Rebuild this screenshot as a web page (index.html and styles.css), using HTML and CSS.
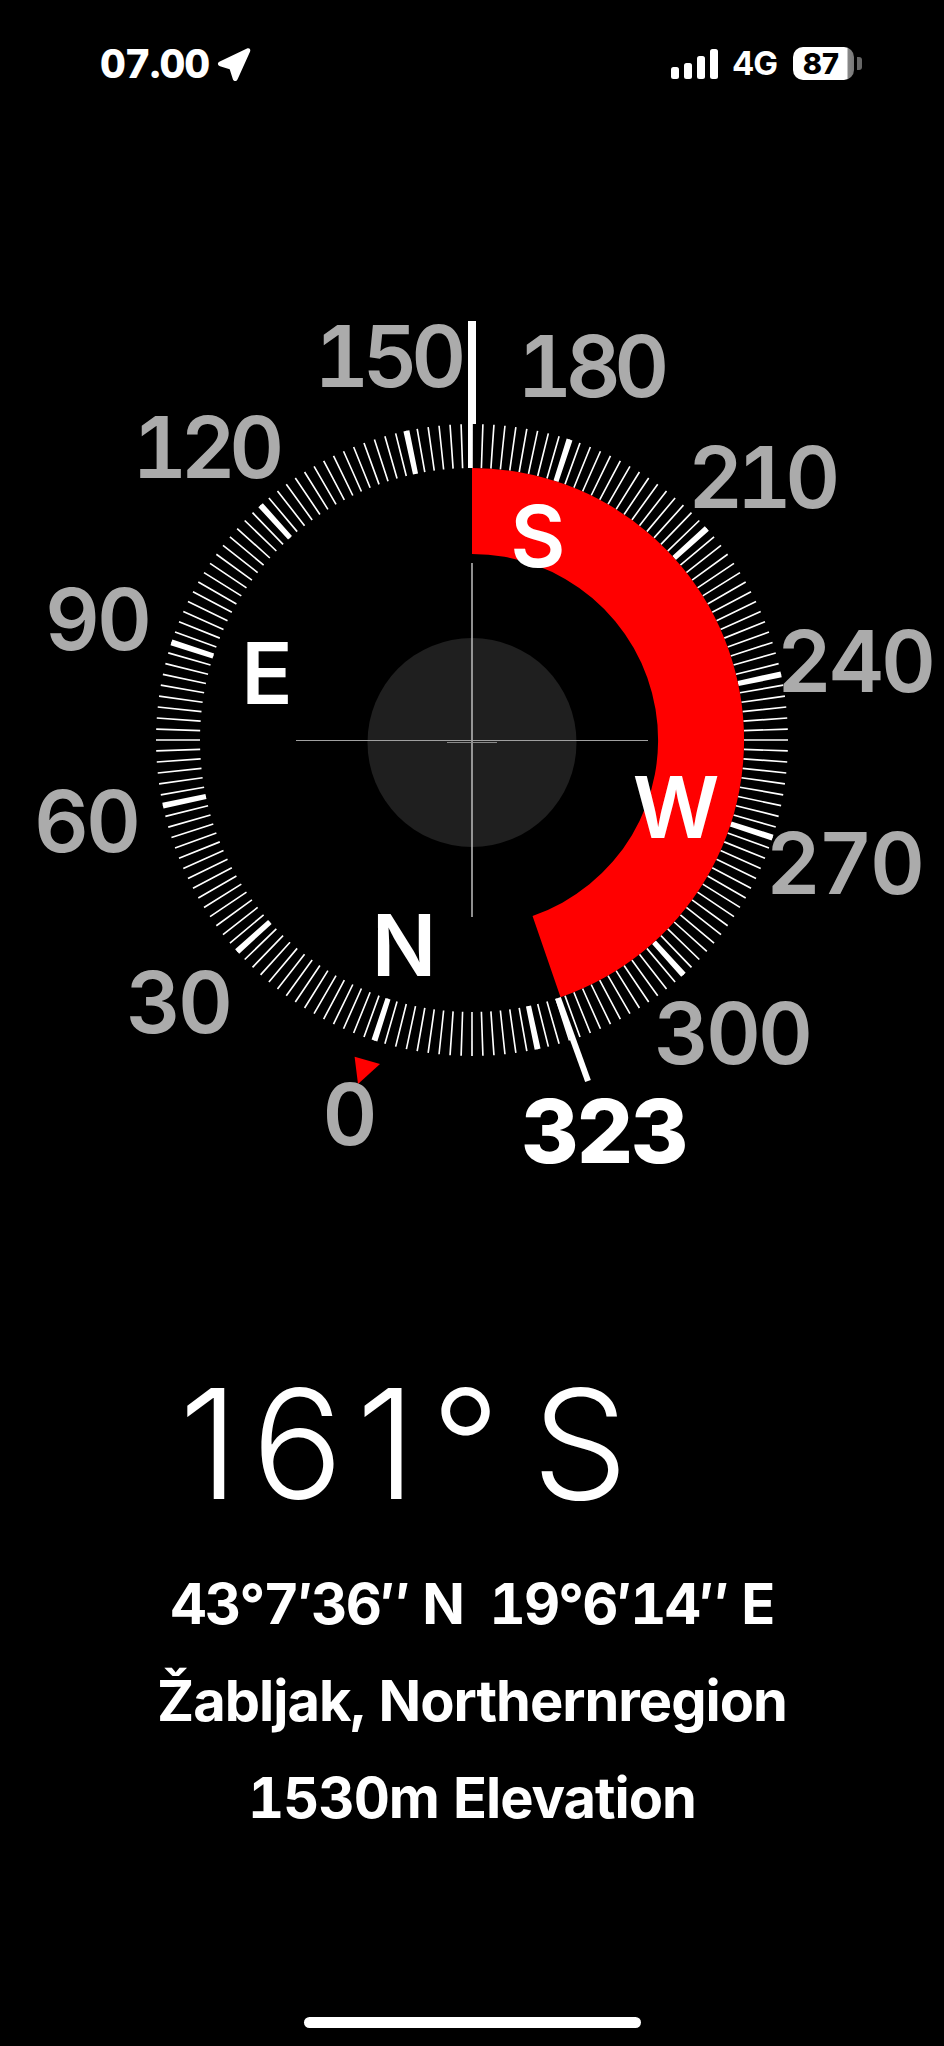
FILE: index.html
```html
<!DOCTYPE html>
<html lang="en">
<head>
<meta charset="utf-8">
<title>Compass</title>
<link rel="stylesheet" href="styles.css">
</head>
<body>
<main class="screen">
  <header class="status">
    <div class="status-left">
      <span class="time">07.00</span>
      <svg class="loc" viewBox="0 0 34 34" width="34" height="34" aria-hidden="true"><path d="M30 .6C32.4-.3 34 1.4 33 3.7L20.6 31.2C19.4 33.800 16.600 33.600 15.800 31L12.700 21.300 3 18.200C.3 17.300.2 14.500 2.800 13.400Z"/></svg>
    </div>
    <div class="status-right">
      <div class="signal"><i class="b1"></i><i class="b2"></i><i class="b3"></i><i class="b4"></i></div>
      <span class="net">4G</span>
      <div class="battery"><span class="level">87</span></div>
      <div class="nub"></div>
    </div>
  </header>

  <svg class="dial" viewBox="0 100 944 1100" width="944" height="1100" role="img" aria-label="Compass dial">
    <circle class="ticks-minor" cx="472" cy="740" r="294" pathLength="360"/>
    <circle class="ticks-major" cx="472" cy="740" r="294" pathLength="360"/>
    <circle class="hub" cx="472" cy="742.500" r="104.500"/>
    <path class="sweep" d="M472 468A272 272 0 0 1 560.55 997.2L532.55 915.9A186 186 0 0 0 472 554Z"/>
    <path class="needle" d="M468 321H476V424H472V468H468Z"/>
    <line class="marker" x1="558" y1="998" x2="588" y2="1081"/>
    <path class="north" d="M354.600 1056.700L380 1064 358 1084Z"/>
    <line class="cross-v" x1="472" y1="563" x2="472" y2="917"/>
    <line class="cross-h" x1="296" y1="740.500" x2="648" y2="740.500"/>
    <line class="cross-s" x1="447" y1="742.500" x2="497" y2="742.500"/>

    <text class="deg deg-one" x="387" y="387">150</text>
    <text class="deg deg-one" x="590" y="397">180</text>
    <text class="deg deg-one" x="205" y="478">120</text>
    <text class="deg deg-one" x="761" y="508">210</text>
    <text class="deg" x="97" y="650">90</text>
    <text class="deg" x="855" y="692">240</text>
    <text class="deg" x="86" y="852">60</text>
    <text class="deg" x="844" y="894">270</text>
    <text class="deg" x="178" y="1033">30</text>
    <text class="deg" x="732" y="1064">300</text>
    <text class="deg" x="348.500" y="1145">0</text>
    <text class="deg deg-now" x="604" y="1163">323</text>

    <text class="card" x="267" y="704">E</text>
    <text class="card" x="538" y="567">S</text>
    <text class="card" x="676" y="838">W</text>
    <text class="card" x="404" y="976">N</text>
  </svg>

  <section class="readout">
    <div class="heading"><span class="heading-num">161</span>° S</div>
    <div class="info">
      <p class="coords">43°7′36″ N&nbsp; 19°6′14″ E</p>
      <p>Žabljak, Northernregion</p>
      <p>1530m Elevation</p>
    </div>
  </section>
  <div class="home"></div>
</main>
</body>
</html>
```
FILE: styles.css
```css
* { box-sizing: border-box; }
html, body { margin: 0; background: #000; }
body { font-family: Inter, "Liberation Sans", sans-serif; color: #fff; }
.screen { width: 944px; height: 2046px; overflow: hidden; display: flex; flex-direction: column; }

.status { height: 100px; padding: 47px 82px 0 100px; display: flex; justify-content: space-between; align-items: flex-start; }
.status-left { display: flex; align-items: center; gap: 8px; height: 34px; }
.time { font-size: 40px; font-weight: 800; line-height: 34px; letter-spacing: -1px; font-variant-numeric: tabular-nums; }
.loc { fill: #fff; margin-top: 1px; }
.status-right { display: flex; align-items: center; height: 33px; }
.signal { display: flex; align-items: flex-end; gap: 5px; height: 30px; margin-top: 1px; }
.signal i { display: block; width: 8px; background: #fff; border-radius: 2.5px; }
.b1 { height: 12px; } .b2 { height: 16px; } .b3 { height: 23px; } .b4 { height: 30px; }
.net { font-size: 33px; font-weight: 700; line-height: 33px; margin-left: 14px; letter-spacing: -1px; }
.battery { width: 61px; height: 33px; margin-left: 16px; border-radius: 10px; background: linear-gradient(90deg, #fff 0, #fff 54px, #888 55px, #777 100%); color: #000; display: flex; align-items: center; justify-content: center; }
.level { font-size: 29px; font-weight: 800; line-height: 33px; margin-right: 5px; }
.nub { width: 5px; height: 13px; margin-left: 3px; background: #666; border-radius: 0 3px 3px 0; }

.dial { display: block; flex: none; }
.ticks-minor, .ticks-major { fill: none; stroke: #fff; stroke-width: 44; }
.ticks-minor { stroke-dasharray: 0.32 1.68; stroke-dashoffset: 0.16; }
.ticks-major { stroke-dasharray: 1.1 28.9; stroke-dashoffset: -17.45; }
.hub { fill: #1f1f1f; }
.sweep, .north { fill: #f00; }
.needle { fill: #fff; }
.marker { stroke: #fff; stroke-width: 6; }
.cross-v { stroke: #b4b4b4; stroke-width: 1.6; }
.cross-h { stroke: #a0a0a0; stroke-width: 1.2; }
.cross-s { stroke: #8a8a8a; stroke-width: 1.2; }
.deg { font-family: Inter, sans-serif; font-size: 85px; font-weight: 600; fill: #ababab; text-anchor: middle; letter-spacing: -3px; font-variant-numeric: tabular-nums; }
.deg-one { letter-spacing: -6.500px; }
.deg-now { fill: #fff; font-weight: 800; font-size: 88px; letter-spacing: -2px; }
.card { font-family: Inter, sans-serif; font-size: 85px; font-weight: 600; fill: #fff; text-anchor: middle; }

.readout { flex: none; }
.heading { font-size: 152px; font-weight: 300; line-height: 180px; padding-left: 179px; margin-top: 154px; word-spacing: -11px; white-space: pre; }
.heading-num { letter-spacing: 13px; margin-right: 2px; }
.info { margin-top: 22px; text-align: center; font-size: 56px; font-weight: 700; line-height: 97px; letter-spacing: -1px; font-variant-numeric: tabular-nums; }
.info p { margin: 0; }
.info .coords { letter-spacing: -1.8px; }
.home { width: 337px; height: 11px; margin: auto auto 18px; border-radius: 6px; background: #fff; flex: none; }
```
